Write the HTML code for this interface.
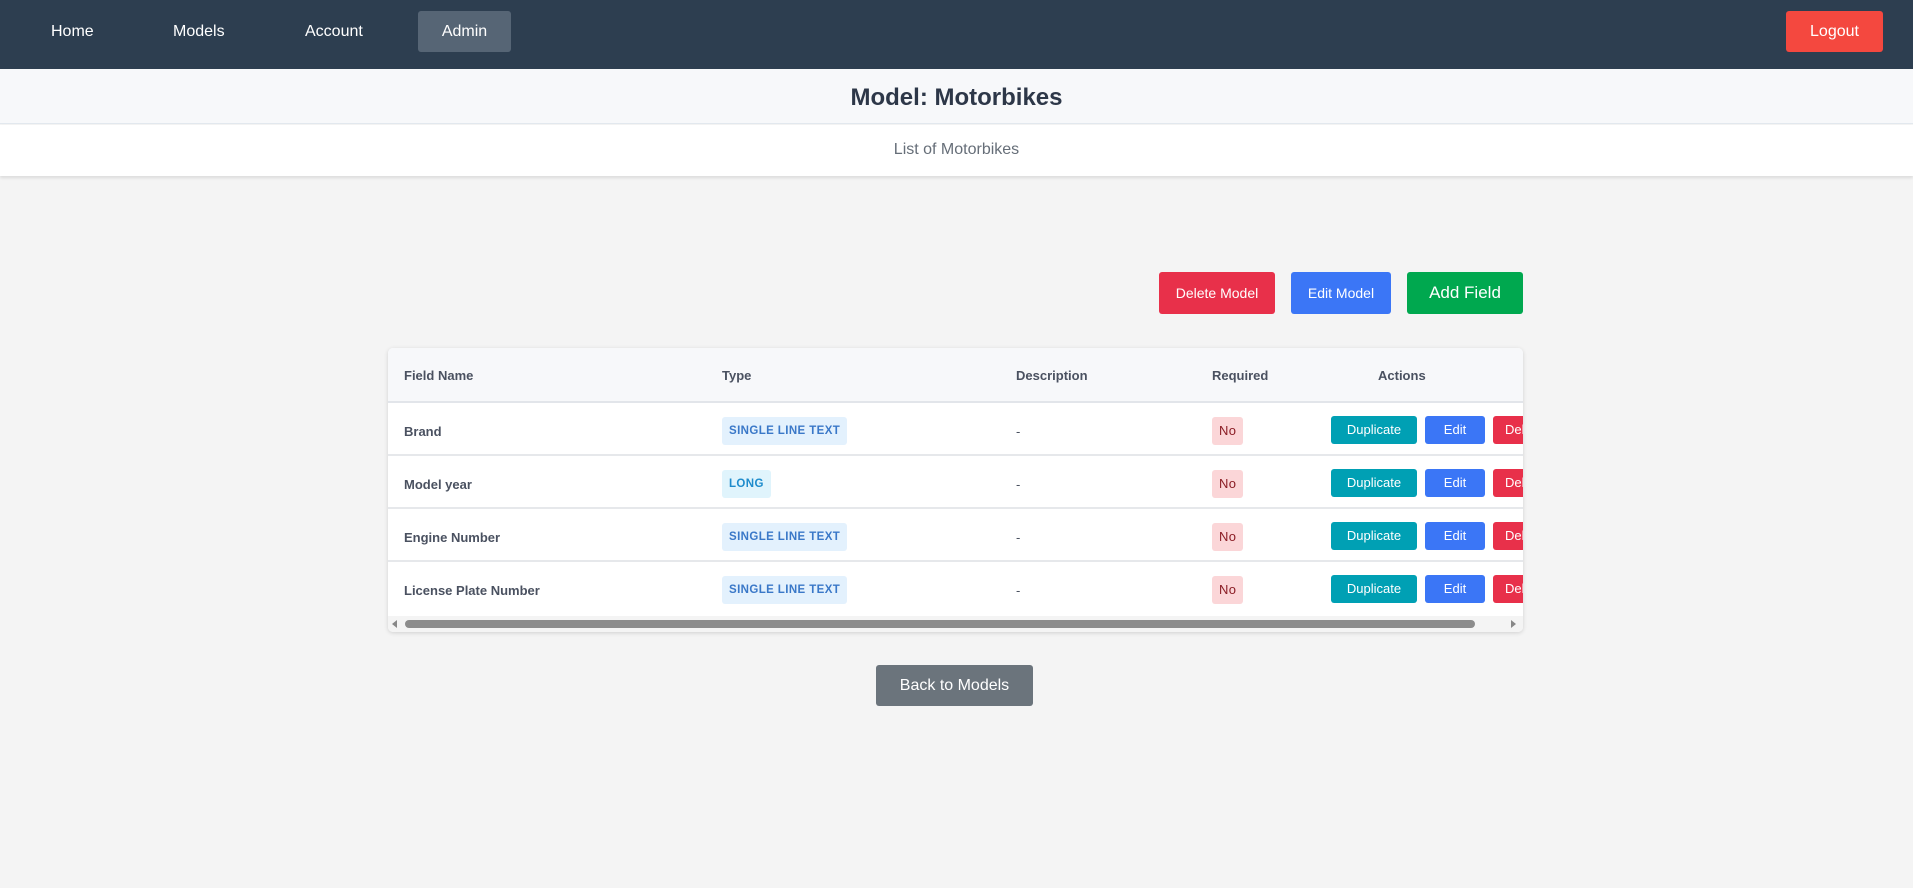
<!DOCTYPE html>
<html><head><meta charset="utf-8"><style>
*{box-sizing:border-box;margin:0;padding:0}
body{width:1913px;height:888px;background:#f4f4f4;font-family:"Liberation Sans",Arial,sans-serif;position:relative;overflow:hidden}
.nav{position:absolute;left:0;top:0;width:1913px;height:69px;background:#2d3e50;box-shadow:0 2px 4px rgba(0,0,0,.15)}
.nav a{position:absolute;top:11px;height:41px;line-height:41px;color:#fff;font-size:16px;text-decoration:none}
.admin{background:#566575;border-radius:3px;width:93px;text-align:center}
.logout{background:#f4483f;border-radius:3px;width:97px;text-align:center}
.hdr{position:absolute;left:0;top:69px;width:1913px;height:55px;background:#f7f8fa;border-bottom:1px solid #e2e8ee;text-align:center;font-size:24px;font-weight:bold;color:#2d3748;line-height:58px}
.sub{position:absolute;left:0;top:125px;width:1913px;height:51px;background:#fff;box-shadow:0 2px 3px rgba(0,0,0,.1);text-align:center;font-size:16px;color:#666e78;line-height:50px}
.btn{position:absolute;color:#fff;border-radius:3px;text-align:center;font-size:14px}
.card{position:absolute;left:388px;top:348px;width:1135px;height:284px;background:#fff;border-radius:5px;box-shadow:0 1px 4px rgba(0,0,0,.15);overflow:hidden}
.th{position:absolute;left:0;top:0;width:1135px;height:55px;background:#f7f8fa;border-bottom:2px solid #e2e5ea}
.t{position:absolute;font-size:13px;color:#4a5160}
.b{font-weight:bold}
.row{position:absolute;left:0;width:1135px;height:53px;border-bottom:2px solid #e6e8eb}
.badge{position:absolute;height:28px;line-height:28px;font-size:11.5px;font-weight:bold;border-radius:3px;padding:0 7px;letter-spacing:.4px}
.sbtn{position:absolute;height:28px;line-height:28px;color:#fff;font-size:13px;text-align:center;border-radius:3px}
</style></head><body>
<div class="nav">
<a style="left:51px">Home</a>
<a style="left:173px">Models</a>
<a style="left:305px">Account</a>
<a class="admin" style="left:418px">Admin</a>
<a class="logout" style="left:1786px">Logout</a>
</div>
<div class="hdr">Model: Motorbikes</div>
<div class="sub">List of Motorbikes</div>
<div class="btn" style="left:1159px;top:272px;width:116px;height:42px;line-height:42px;background:#e8304a">Delete Model</div>
<div class="btn" style="left:1291px;top:272px;width:100px;height:42px;line-height:42px;background:#3b76f6">Edit Model</div>
<div class="btn" style="left:1407px;top:272px;width:116px;height:42px;line-height:42px;background:#00a84f;font-size:17px">Add Field</div>
<div class="card">
<div class="th">
<div class="t b" style="left:16px;top:20px">Field Name</div>
<div class="t b" style="left:334px;top:20px">Type</div>
<div class="t b" style="left:628px;top:20px">Description</div>
<div class="t b" style="left:824px;top:20px">Required</div>
<div class="t b" style="left:990px;top:20px">Actions</div>
</div>
<div class="row" style="top:55px"><div class="t b" style="left:16px;top:21px">Brand</div><div class="badge" style="left:334px;top:14px;background:#e3f1fd;color:#3a78c8">SINGLE LINE TEXT</div><div class="t" style="left:628px;top:21px">-</div><div class="badge" style="left:824px;top:14px;background:#fbd6d8;color:#8a1c24;font-weight:normal;font-size:13px">No</div><div class="sbtn" style="left:943px;top:13px;width:86px;background:#00a0b4">Duplicate</div><div class="sbtn" style="left:1037px;top:13px;width:60px;background:#3b76f6">Edit</div><div class="sbtn" style="left:1105px;top:13px;width:60px;background:#e8304a;text-align:left;padding-left:12px">Delete</div></div>
<div class="row" style="top:108px"><div class="t b" style="left:16px;top:21px">Model year</div><div class="badge" style="left:334px;top:14px;background:#e0f4fc;color:#1e8ccc">LONG</div><div class="t" style="left:628px;top:21px">-</div><div class="badge" style="left:824px;top:14px;background:#fbd6d8;color:#8a1c24;font-weight:normal;font-size:13px">No</div><div class="sbtn" style="left:943px;top:13px;width:86px;background:#00a0b4">Duplicate</div><div class="sbtn" style="left:1037px;top:13px;width:60px;background:#3b76f6">Edit</div><div class="sbtn" style="left:1105px;top:13px;width:60px;background:#e8304a;text-align:left;padding-left:12px">Delete</div></div>
<div class="row" style="top:161px"><div class="t b" style="left:16px;top:21px">Engine Number</div><div class="badge" style="left:334px;top:14px;background:#e3f1fd;color:#3a78c8">SINGLE LINE TEXT</div><div class="t" style="left:628px;top:21px">-</div><div class="badge" style="left:824px;top:14px;background:#fbd6d8;color:#8a1c24;font-weight:normal;font-size:13px">No</div><div class="sbtn" style="left:943px;top:13px;width:86px;background:#00a0b4">Duplicate</div><div class="sbtn" style="left:1037px;top:13px;width:60px;background:#3b76f6">Edit</div><div class="sbtn" style="left:1105px;top:13px;width:60px;background:#e8304a;text-align:left;padding-left:12px">Delete</div></div>
<div class="row" style="top:214px;border-bottom:none"><div class="t b" style="left:16px;top:21px">License Plate Number</div><div class="badge" style="left:334px;top:14px;background:#e3f1fd;color:#3a78c8">SINGLE LINE TEXT</div><div class="t" style="left:628px;top:21px">-</div><div class="badge" style="left:824px;top:14px;background:#fbd6d8;color:#8a1c24;font-weight:normal;font-size:13px">No</div><div class="sbtn" style="left:943px;top:13px;width:86px;background:#00a0b4">Duplicate</div><div class="sbtn" style="left:1037px;top:13px;width:60px;background:#3b76f6">Edit</div><div class="sbtn" style="left:1105px;top:13px;width:60px;background:#e8304a;text-align:left;padding-left:12px">Delete</div></div>
<div style="position:absolute;left:0;top:268px;width:1135px;height:16px;background:#f4f4f4"></div>
<div style="position:absolute;left:17px;top:272px;width:1070px;height:8px;background:#8c8c8c;border-radius:4px"></div>
<div style="position:absolute;left:4px;top:272px;width:0;height:0;border-top:4px solid transparent;border-bottom:4px solid transparent;border-right:5px solid #888"></div>
<div style="position:absolute;left:1123px;top:272px;width:0;height:0;border-top:4px solid transparent;border-bottom:4px solid transparent;border-left:5px solid #888"></div>
</div>
<div class="btn" style="left:876px;top:665px;width:157px;height:41px;line-height:41px;background:#6b747c;font-size:16px">Back to Models</div>
</body></html>
